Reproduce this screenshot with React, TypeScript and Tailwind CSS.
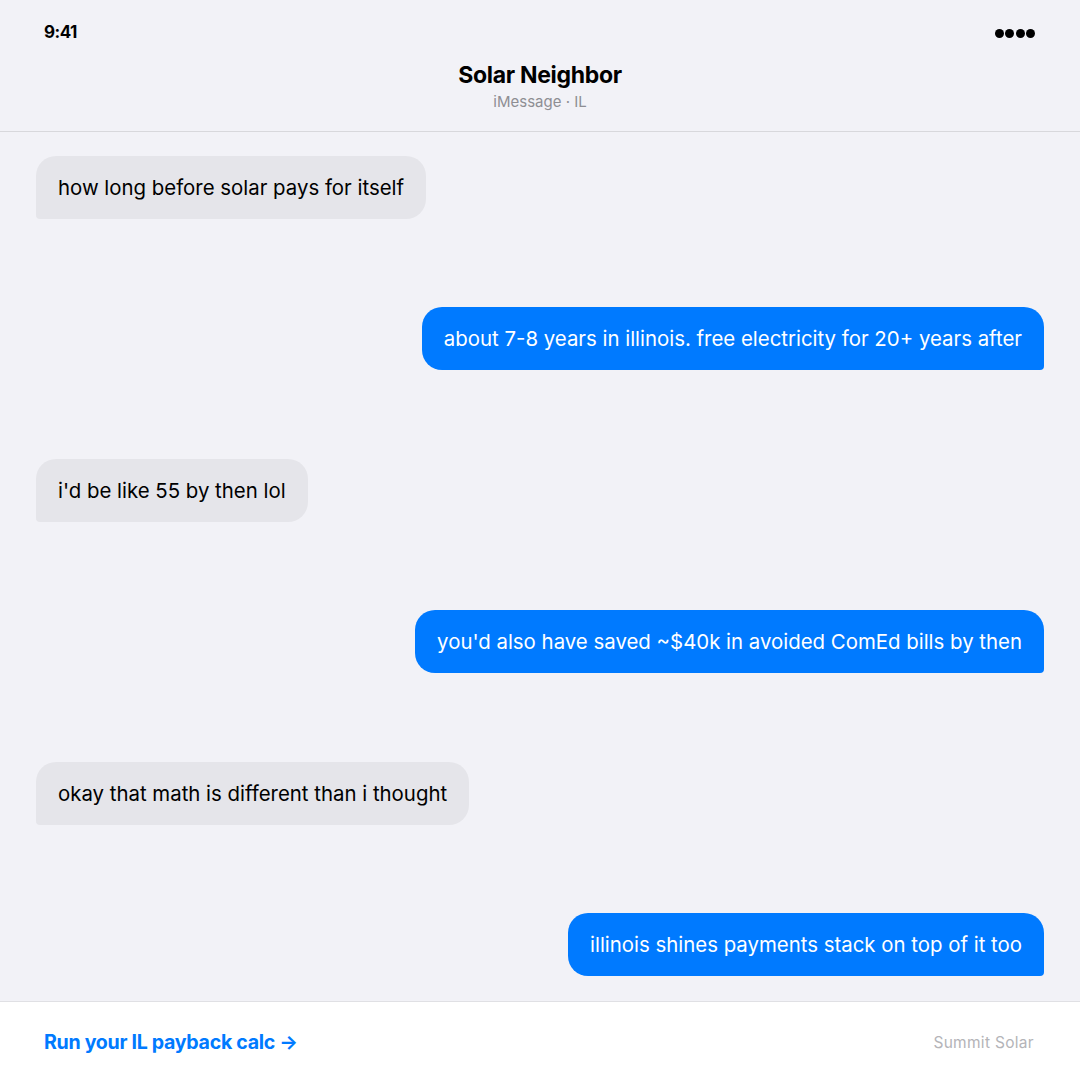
import React from "react";

const font = { fontFamily: "Inter, 'Noto Sans', sans-serif" };

function Bubble({ text, me }: { text: string; me?: boolean }) {
  return (
    <div className={me ? "flex justify-end" : "flex justify-start"}>
      <div
        className={
          me
            ? "bg-[#007aff] text-white text-[20.4px] leading-[63px] h-[63px] px-[22px] rounded-[20px] rounded-br-[4px] whitespace-nowrap"
            : "bg-[#e5e5ea] text-black text-[20.4px] leading-[63px] h-[63px] px-[22px] rounded-[20px] rounded-bl-[4px] whitespace-nowrap"
        }
      >
        {text}
      </div>
    </div>
  );
}

export default function App() {
  return (
    <div className="w-[1080px] h-[1080px] bg-[#f2f2f7] flex flex-col" style={font}>
      <div className="h-[132px] border-b border-[#d8d8dc] flex flex-col">
        <div className="flex items-center justify-between px-[44px] pl-[44px] pr-[45px] pt-[22px] h-[44px]">
          <span className="text-[17px] font-bold text-black tracking-[-0.5px]">9:41</span>
          <div className="flex gap-[1.5px]">
            <span className="w-[9px] h-[9px] rounded-full bg-black" />
            <span className="w-[9px] h-[9px] rounded-full bg-black" />
            <span className="w-[9px] h-[9px] rounded-full bg-black" />
            <span className="w-[9px] h-[9px] rounded-full bg-black" />
          </div>
        </div>
        <div className="flex flex-col items-center mt-[17px]">
          <div className="text-[23px] font-bold text-black leading-[28px] tracking-[-0.3px]">Solar Neighbor</div>
          <div className="text-[15px] text-[#8e8e93] leading-[20px] mt-[3px]">iMessage · IL</div>
        </div>
      </div>
      <div className="flex-1 flex flex-col justify-between pl-[36px] pr-[36px] pt-[24px] pb-[25px]">
        <Bubble text="how long before solar pays for itself" />
        <Bubble me text="about 7-8 years in illinois. free electricity for 20+ years after" />
        <Bubble text="i'd be like 55 by then lol" />
        <Bubble me text="you'd also have saved ~$40k in avoided ComEd bills by then" />
        <Bubble text="okay that math is different than i thought" />
        <Bubble me text="illinois shines payments stack on top of it too" />
      </div>
      <div className="h-[79px] bg-white border-t border-[#e0e0e4] flex items-center justify-between pl-[44px] pr-[46px] pt-[4px]">
        <span className="text-[19.6px] font-bold text-[#007aff] tracking-[-0.3px]">Run your IL payback calc →</span>
        <span className="text-[15.5px] text-[#b4b4b8] tracking-[0.3px]">Summit Solar</span>
      </div>
    </div>
  );
}
